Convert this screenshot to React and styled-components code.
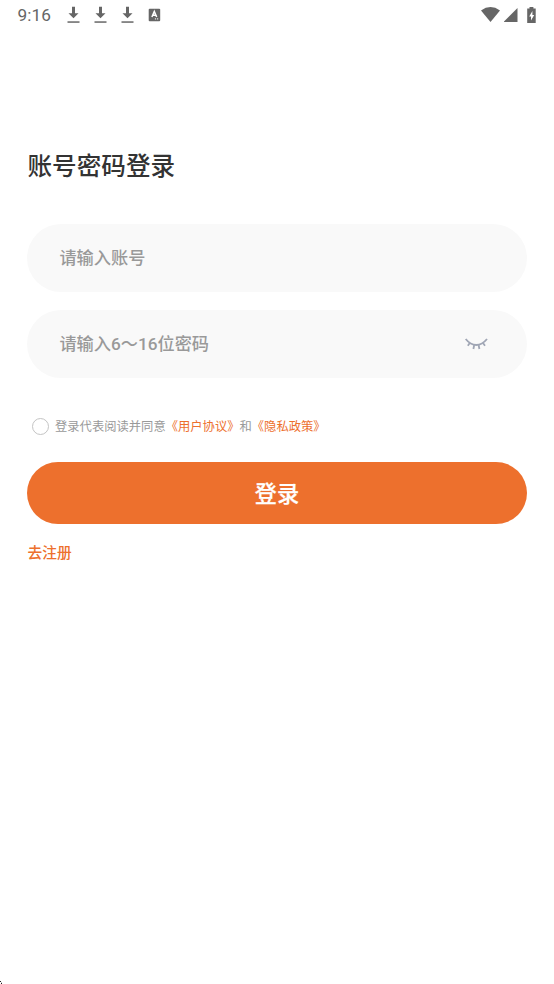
import React, {useState} from 'react';
import styled, {createGlobalStyle} from 'styled-components';

const GlobalStyle = createGlobalStyle`
    * {
        box-sizing: border-box;
    }
    body {
        margin: 0;
        background: #fff;
        font-family: Roboto, 'Noto Sans CJK SC', sans-serif;
    }
`;

const Screen = styled.div`
    position: relative;
    height: 984px;
    overflow: hidden;
    background: #fff;
`;

const StatusBar = styled.header`
    display: flex;
    align-items: center;
    height: 30px;
    padding: 0 17px 0 17.4px;
    color: #666;
`;

const Clock = styled.span`
    width: 48.6px;
    font-size: 17.2px;
    line-height: 30px;
    letter-spacing: 0.1px;
`;

const Notifications = styled.div`
    display: flex;
    gap: 13px;
    flex: 1;
`;

const Signals = styled.div`
    display: flex;
    align-items: center;
    padding-bottom: 1px;
`;

const Icon = styled.svg`
    display: block;
    flex: none;
    margin-right: ${props => props.$gap || 0}px;
`;

const Form = styled.form`
    padding: 118px 27px 0;
`;

const Title = styled.h1`
    margin: 0 0 40px 0.5px;
    height: 36px;
    font-size: 24.6px;
    font-weight: 500;
    line-height: 37px;
    color: #333;
`;

const Field = styled.label`
    display: flex;
    align-items: center;
    height: 67.5px;
    margin-bottom: 18.5px;
    padding: 0 39px 0 32.4px;
    border-radius: 34px;
    background: #f9f9f9;
`;

const Input = styled.input`
    flex: 1;
    min-width: 0;
    height: 30px;
    padding: 0;
    border: 0;
    outline: 0;
    background: transparent;
    font-family: inherit;
    font-size: 17.2px;
    font-weight: 500;
    color: #333;

    &::placeholder {
        color: #999;
        opacity: 1;
    }
`;

const EyeButton = styled.button`
    display: flex;
    padding: 0;
    border: 0;
    background: none;
`;

const Agreement = styled.div`
    display: flex;
    align-items: center;
    height: 24px;
    margin-top: 36.5px;
    padding-left: 5px;
    color: #999;
`;

const AgreementText = styled.span`
    padding-top: 1px;
    font-size: 12.3px;
    line-height: 24px;
`;

const Radio = styled.button`
    width: 17px;
    height: 17px;
    margin-right: 6px;
    padding: 0;
    border: 1px solid #c4c4c4;
    border-radius: 50%;
    background: ${props => (props.$checked ? '#ed702d' : '#fff')};
`;

const Link = styled.span`
    color: #ed702d;
`;

const Submit = styled.button`
    display: block;
    width: 100%;
    height: 61.5px;
    margin-top: 24px;
    padding: 2px 0 0;
    border: 0;
    border-radius: 31px;
    background: #ed702d;
    font-family: inherit;
    font-size: 22.2px;
    font-weight: 500;
    line-height: 60px;
    color: #fff;
    -webkit-text-stroke: 0.25px #fff;
`;

const Register = styled.div`
    margin: 17.5px 0 0 0.5px;
    font-size: 14.7px;
    font-weight: 500;
    line-height: 24px;
    color: #ed702d;
`;

const CornerMark = styled.svg`
    position: absolute;
    left: 0;
    bottom: 0;
`;

const DownloadIcon = () => (
    <Icon width='14' height='18' viewBox='0 0 14 18' fill='#666'>
        <path d='M6 .8h3v6.4h3.5l-5 5-5-5H6z' />
        <path d='M1.5 15.3h12v1.5h-12z' />
    </Icon>
);

const App = () => {
    const [checked, setChecked] = useState(false);

    return (
        <>
            <GlobalStyle />
            <Screen>
                <StatusBar>
                    <Clock>9:16</Clock>
                    <Notifications>
                        <DownloadIcon />
                        <DownloadIcon />
                        <DownloadIcon />
                        <Icon width='14' height='18' viewBox='0 0 14 18'>
                            <rect x='1.7' y='2.7' width='11.5' height='12.5' rx='1' fill='#666' />
                            <path d='M4.9 11 7.3 5.4 9.7 11M5.9 9.3h3' fill='none' stroke='#fff' strokeWidth='1.5' />
                            <path d='M7.9 12.9h1.2M10 12.9h1.2' stroke='#fff' />
                        </Icon>
                    </Notifications>
                    <Signals>
                        <Icon width='20' height='16' viewBox='0 0 20 16' $gap={3}>
                            <path d='M0 3.4Q9.5-3.2 19 3.4L9.5 15z' fill='#666' />
                        </Icon>
                        <Icon width='14' height='14' viewBox='0 0 14 14' $gap={9}>
                            <path d='M13.5 0v14H-.5z' fill='#666' />
                        </Icon>
                        <Icon width='10' height='16' viewBox='0 0 10 16'>
                            <path d='M2.5 0h3.9v1.5h2.3V16H.2V1.5h2.3z' fill='#666' />
                            <path d='M5.4 4v4h1.8L4 13.5V9.5H2.2z' fill='#fff' />
                        </Icon>
                    </Signals>
                </StatusBar>
                <Form onSubmit={e => e.preventDefault()}>
                    <Title>账号密码登录</Title>
                    <Field>
                        <Input type='text' placeholder='请输入账号' autoComplete='off' />
                    </Field>
                    <Field>
                        <Input type='password' placeholder='请输入6～16位密码' autoComplete='off' />
                        <EyeButton type='button'>
                            <Icon width='24' height='14' viewBox='0 0 24 14' fill='none' stroke='#a0a6b5' strokeWidth='1.8'>
                                <path d='M1.7 2Q6.5 8 12.3 8T23 2' />
                                <path d='M5.8 6 3.8 8.7M10.2 8l-.8 4M14.6 8l.8 4M19 6l2 2.7' />
                            </Icon>
                        </EyeButton>
                    </Field>
                    <Agreement>
                        <Radio type='button' $checked={checked} onClick={() => setChecked(!checked)} />
                        <AgreementText>
                            登录代表阅读并同意<Link>《用户协议》</Link>和<Link>《隐私政策》</Link>
                        </AgreementText>
                    </Agreement>
                    <Submit type='submit'>登录</Submit>
                    <Register>去注册</Register>
                </Form>
                <CornerMark width='3' height='4' viewBox='0 0 3 4'>
                    <path d='M0 1h1v1H0zM1 2.7h1V4H1z' fill='#222' />
                </CornerMark>
            </Screen>
        </>
    );
};

export default App;
